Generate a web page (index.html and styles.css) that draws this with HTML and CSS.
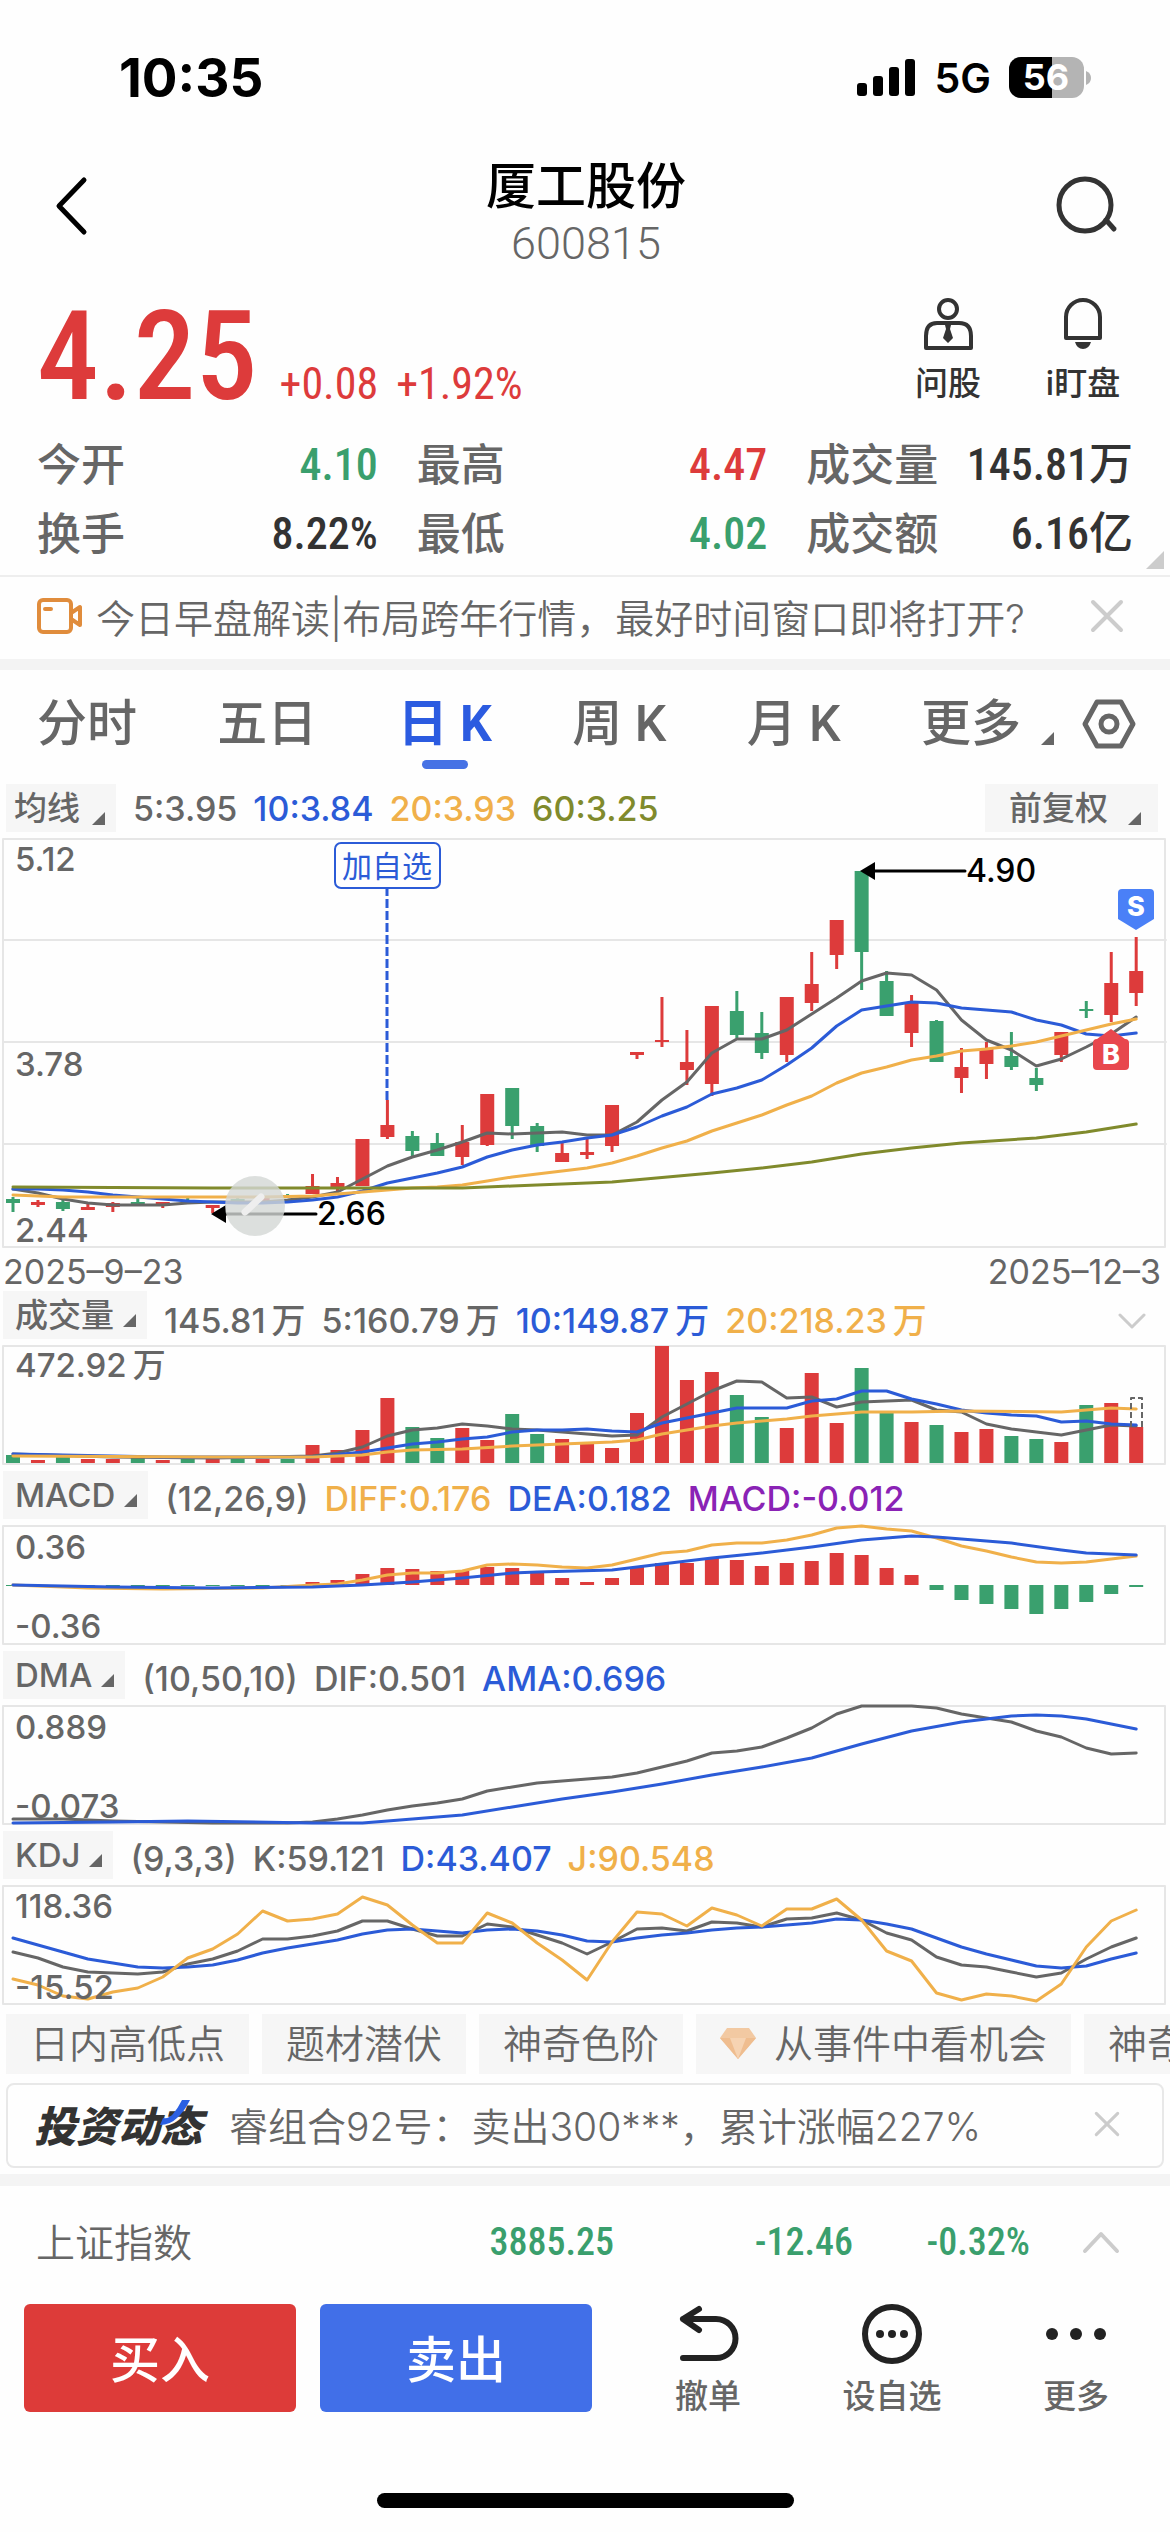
FILE: index.html
```
<!DOCTYPE html>
<html lang="zh-CN">
<head>
    <meta charset="UTF-8">
    <meta name="viewport" content="width=device-width, initial-scale=1.0">
    <title>厦工股份 600815</title>
    <link rel="stylesheet" href="styles.css">
</head>
<body>
    <div class="status-bar">
        <span class="time">10:35</span>
        <div class="status-right">
            <svg class="signal" width="60" height="38" viewBox="0 0 60 38">
                <rect x="0" y="24" width="10" height="13" rx="3"/>
                <rect x="16" y="17" width="10" height="20" rx="3"/>
                <rect x="32" y="8" width="10" height="29" rx="3"/>
                <rect x="48" y="0" width="10" height="37" rx="3"/>
            </svg>
            <span class="network">5G</span>
            <svg class="battery" width="82" height="42" viewBox="0 0 82 42">
                <rect x="0" y="0" width="75" height="41" rx="12" fill="#b4b4b4"/>
                <path d="M12 0h31v41H12A12 12 0 0 1 0 29V12A12 12 0 0 1 12 0z" fill="#000"/>
                <path d="M77 14q5 2 5 7t-5 7z" fill="#b4b4b4"/>
                <text x="37" y="33" text-anchor="middle">56</text>
            </svg>
        </div>
    </div>

    <header class="header">
        <button class="icon-btn back" aria-label="返回">
            <svg width="34" height="60" viewBox="0 0 34 60"><path d="M30 4L5 30l25 26"/></svg>
        </button>
        <div class="title">
            <h1>厦工股份</h1>
            <p>600815</p>
        </div>
        <button class="icon-btn search" aria-label="搜索">
            <svg width="64" height="60" viewBox="0 0 64 60"><circle cx="31" cy="29" r="26"/><path d="M52 44l8 9"/></svg>
        </button>
    </header>

    <section class="quote">
        <div class="quote-top">
            <div class="price">
                <strong>4.25</strong>
                <span>+0.08</span>
                <span>+1.92%</span>
            </div>
            <div class="shortcuts">
                <button>
                    <svg width="50" height="54" viewBox="0 0 50 54">
                        <circle cx="25" cy="13" r="9"/>
                        <path d="M14 27h22q12 0 12 13v12H3V40q0-13 11-13z"/>
                        <path class="fill" d="M22 29h6l-1 4 3 9-5 5-5-5 3-9z"/>
                    </svg>
                    问股
                </button>
                <button>
                    <svg width="50" height="54" viewBox="0 0 50 54">
                        <path d="M8 42V21a17 17 0 0 1 34 0v21z"/>
                        <path class="fill" d="M17 46h16q-2 7-8 7t-8-7z"/>
                    </svg>
                    i盯盘
                </button>
            </div>
        </div>
        <div class="stats">
            <div><span>今开</span><b class="green">4.10</b></div>
            <div><span>最高</span><b class="red">4.47</b></div>
            <div><span>成交量</span><b>145.81万</b></div>
            <div><span>换手</span><b>8.22%</b></div>
            <div><span>最低</span><b class="green">4.02</b></div>
            <div><span>成交额</span><b>6.16亿</b></div>
        </div>
        <i class="corner"></i>
    </section>

    <div class="notice">
        <svg class="video" width="46" height="38" viewBox="0 0 46 38">
            <rect x="2" y="3" width="32" height="32" rx="4"/>
            <path d="M8 12h6M34 16l9-6v18l-9-6"/>
        </svg>
        <a href="#">今日早盘解读|布局跨年行情，最好时间窗口即将打开?</a>
        <button class="close" aria-label="关闭">
            <svg width="34" height="34" viewBox="0 0 34 34"><path d="M3 3l28 28M31 3L3 31"/></svg>
        </button>
    </div>

    <nav class="tabs">
        <div class="tab-list">
            <a href="#">分时</a>
            <a href="#">五日</a>
            <a href="#" class="active">日 K</a>
            <a href="#">周 K</a>
            <a href="#">月 K</a>
            <a href="#" class="more">更多<i class="tri"></i></a>
        </div>
        <button class="settings" aria-label="设置">
            <svg width="54" height="50" viewBox="0 0 54 50"><path d="M15 3h24l12 22-12 22H15L3 25z"/><circle cx="27" cy="25" r="8"/></svg>
        </button>
    </nav>

    <section class="panel">
        <div class="panel-head ma-head">
            <button class="tag">均线<i class="tri"></i></button>
            <p class="values"><span>5:3.95</span><span class="blue">10:3.84</span><span class="orange">20:3.93</span><span class="olive">60:3.25</span></p>
            <button class="tag adjust">前复权<i class="tri"></i></button>
        </div>
        <svg class="chart" id="kline" viewBox="0 0 1170 410">
            <path class="grid" d="M3 102H1166M3 204H1166M3 306H1166"/>
            <rect class="frame" x="3" y="1" width="1162" height="408"/>
            <g class="plot"></g>
            <g class="favorite">
                <path d="M387 49V262" stroke-dasharray="9 3"/>
                <rect x="335" y="5" width="105" height="45" rx="6"/>
                <text x="387" y="39" text-anchor="middle">加自选</text>
            </g>
            <g class="callout">
                <path d="M222 376H316" /><path class="head" d="M211 376l15-9v18z"/>
                <text x="317" y="387">2.66</text>
                <path d="M872 33H965"/><path class="head" d="M860 33l15-9v18z"/>
                <text x="966" y="44">4.90</text>
            </g>
            <g class="watermark">
                <circle cx="255" cy="368" r="30"/>
                <path d="M245 374l16-15"/>
            </g>
            <path d="M1122 51h28q4 0 4 4v26l-18 11-18-11V55q0-4 4-4z" fill="#4a80f7"/>
            <path d="M1111 191l14 10q4 0 4 4v23q0 4-4 4h-28q-4 0-4-4v-23q0-4 4-4z" fill="#e8474d"/>
            <text class="mark" x="1136" y="78">S</text>
            <text class="mark" x="1111" y="226">B</text>
            <text class="axis" x="15" y="33">5.12</text>
            <text class="axis" x="15" y="238">3.78</text>
            <text class="axis" x="15" y="404">2.44</text>
        </svg>
        <div class="dates"><span>2025–9–23</span><span>2025–12–3</span></div>
    </section>

    <section class="panel">
        <div class="panel-head">
            <button class="tag">成交量<i class="tri"></i></button>
            <p class="values"><span>145.81<i class="unit">万</i></span><span>5:160.79<i class="unit">万</i></span><span class="blue">10:149.87<i class="unit">万</i></span><span class="orange">20:218.23<i class="unit">万</i></span></p>
            <button class="fold" aria-label="收起">
                <svg width="28" height="18" viewBox="0 0 28 18"><path d="M2 3l12 12L26 3"/></svg>
            </button>
        </div>
        <svg class="chart" id="volume" viewBox="0 0 1170 120">
            <rect class="frame" x="3" y="1" width="1162" height="118"/>
            <g class="plot"></g>
            <path class="estimate" d="M1131 82V53h11v29"/>
            <text class="axis" x="15" y="32">472.92<tspan dx="6">万</tspan></text>
        </svg>
    </section>

    <section class="panel">
        <div class="panel-head">
            <button class="tag">MACD<i class="tri"></i></button>
            <p class="values"><span>(12,26,9)</span><span class="orange">DIFF:0.176</span><span class="blue">DEA:0.182</span><span class="purple">MACD:-0.012</span></p>
        </div>
        <svg class="chart" id="macd" viewBox="0 0 1170 120">
            <rect class="frame" x="3" y="1" width="1162" height="118"/>
            <g class="plot"></g>
            <text class="axis" x="15" y="34">0.36</text>
            <text class="axis" x="15" y="113">-0.36</text>
        </svg>
    </section>

    <section class="panel">
        <div class="panel-head">
            <button class="tag">DMA<i class="tri"></i></button>
            <p class="values"><span>(10,50,10)</span><span>DIF:0.501</span><span class="blue">AMA:0.696</span></p>
        </div>
        <svg class="chart" id="dma" viewBox="0 0 1170 120">
            <rect class="frame" x="3" y="1" width="1162" height="118"/>
            <g class="plot"></g>
            <text class="axis" x="15" y="34">0.889</text>
            <text class="axis" x="15" y="113">-0.073</text>
        </svg>
    </section>

    <section class="panel">
        <div class="panel-head">
            <button class="tag">KDJ<i class="tri"></i></button>
            <p class="values"><span>(9,3,3)</span><span>K:59.121</span><span class="blue">D:43.407</span><span class="orange">J:90.548</span></p>
        </div>
        <svg class="chart" id="kdj" viewBox="0 0 1170 120">
            <rect class="frame" x="3" y="1" width="1162" height="118"/>
            <g class="plot"></g>
            <text class="axis" x="15" y="33">118.36</text>
            <text class="axis" x="15" y="114">-15.52</text>
        </svg>
    </section>

    <div class="chips">
        <button>日内高低点</button>
        <button>题材潜伏</button>
        <button>神奇色阶</button>
        <button>
            <svg width="36" height="32" viewBox="0 0 36 32">
                <path d="M7 0h22l7 10-18 21L0 10z" fill="#f2c9a2"/>
                <path d="M0 10h36L18 31z" fill="#efbd8f"/>
                <path d="M10 10h16l-8 21z" fill="#f6d3b2"/>
            </svg>
            从事件中看机会
        </button>
        <button>神奇电波</button>
    </div>

    <div class="news">
        <span class="news-logo">投资动态<svg width="32" height="28" viewBox="0 0 32 28"><path d="M22 0h8Q24 12 17 18 10 25 0 25l3-7q6 1 10-4Q18 8 22 0z" fill="#2b5fe3"/></svg></span>
        <a href="#">睿组合92号：卖出300***，累计涨幅227%</a>
        <button class="close" aria-label="关闭">
            <svg width="26" height="26" viewBox="0 0 34 34"><path d="M3 3l28 28M31 3L3 31"/></svg>
        </button>
    </div>

    <div class="index-row">
        <span class="index-name">上证指数</span>
        <span class="num">3885.25</span>
        <span class="num">-12.46</span>
        <span class="num">-0.32%</span>
        <button aria-label="展开">
            <svg width="38" height="24" viewBox="0 0 38 24"><path d="M3 21L19 4l16 17"/></svg>
        </button>
    </div>

    <footer class="actions">
        <button class="trade buy">买入</button>
        <button class="trade sell">卖出</button>
        <div class="tools">
            <button>
                <svg width="62" height="60" viewBox="0 0 62 60"><path d="M22 5L6 15l16 11M6 15h33a19 19 0 0 1 0 39H6"/></svg>
                撤单
            </button>
            <button>
                <svg width="62" height="60" viewBox="0 0 62 60">
                    <circle cx="31" cy="30" r="27"/>
                    <g class="dots"><circle cx="19" cy="30" r="4"/><circle cx="31" cy="30" r="4"/><circle cx="43" cy="30" r="4"/></g>
                </svg>
                设自选
            </button>
            <button>
                <svg width="62" height="60" viewBox="0 0 62 60">
                    <g class="dots"><circle cx="7" cy="30" r="6"/><circle cx="31" cy="30" r="6"/><circle cx="55" cy="30" r="6"/></g>
                </svg>
                更多
            </button>
        </div>
    </footer>
    <div class="home-bar"></div>

    <script src="script.js"></script>
</body>
</html>
```
FILE: styles.css
```
* {
    margin: 0;
    padding: 0;
    box-sizing: border-box;
}

body {
    font-family: Inter, 'Noto Sans CJK SC', sans-serif;
    background: #fefefe;
    color: #666;
    overflow-x: hidden;
}

button {
    border: 0;
    background: none;
    font: inherit;
    color: inherit;
    cursor: pointer;
}

a {
    color: inherit;
    text-decoration: none;
}

svg {
    display: block;
    flex: none;
    fill: none;
    stroke-linecap: round;
    stroke-linejoin: round;
}

.red { color: #dd3b3b; }
.green { color: #3a9f6d; }
.blue { color: #2b5bd7; }
.orange { color: #f0b04a; }
.olive { color: #808a2c; }
.purple { color: #8a22b5; }

/* Status bar */
.status-bar {
    display: flex;
    justify-content: space-between;
    align-items: center;
    height: 156px;
    padding: 0 79px 0 119px;
    color: #000;
}

.time {
    font-size: 53px;
    font-weight: 700;
}

.status-right {
    display: flex;
    align-items: center;
    gap: 18px;
}

.signal {
    fill: #000;
}

.network {
    font-size: 41px;
    font-weight: 600;
}

.battery text {
    font-size: 36px;
    font-weight: 700;
    fill: #fff;
}

/* Header */
.header {
    display: flex;
    justify-content: space-between;
    align-items: flex-start;
    height: 114px;
    padding: 0 52px 0 54px;
}

.icon-btn {
    display: flex;
    align-items: center;
    width: 64px;
    height: 100px;
}

.back svg {
    stroke: #000;
    stroke-width: 5;
}

.search svg {
    stroke: #333;
    stroke-width: 5;
}

.title {
    text-align: center;
}

.title h1 {
    font-size: 50px;
    font-weight: 500;
    line-height: 61px;
    color: #000;
}

.title p {
    font-family: Roboto, sans-serif;
    font-size: 45px;
    font-weight: 300;
    line-height: 54px;
}

/* Quote */
.quote {
    position: relative;
    padding: 0 37px 6px;
    border-bottom: 2px solid #eee;
}

.quote-top {
    display: flex;
    justify-content: space-between;
    height: 161px;
}

.price {
    display: flex;
    align-items: baseline;
    gap: 18px;
    font-family: 'Roboto Condensed', Roboto, sans-serif;
    font-size: 44px;
    line-height: 174px;
    color: #dd3b3b;
}

.price strong {
    margin-right: 4px;
    font-size: 124px;
    font-weight: 500;
}

.shortcuts {
    display: flex;
    gap: 35px;
    padding-top: 26px;
}

.shortcuts button {
    display: flex;
    flex-direction: column;
    align-items: center;
    gap: 8px;
    min-width: 100px;
    font-size: 33px;
    font-weight: 500;
    line-height: 50px;
    color: #333;
}

.shortcuts svg {
    stroke: #333;
    stroke-width: 4;
}

.shortcuts .fill {
    fill: #333;
    stroke: none;
}

.stats {
    display: grid;
    grid-template-columns: 340fr 350fr 326fr;
    column-gap: 39px;
}

.stats div {
    display: flex;
    justify-content: space-between;
    font-size: 44px;
    font-weight: 500;
    line-height: 69px;
}

.stats b {
    font-family: 'Roboto Condensed', Roboto, 'Noto Sans CJK SC', sans-serif;
    font-weight: 500;
}

.stats b:not([class]) {
    color: #333;
}

.corner {
    position: absolute;
    right: 6px;
    bottom: 6px;
    border-left: 18px solid transparent;
    border-bottom: 18px solid #ccc;
}

/* Notice */
.notice {
    display: flex;
    align-items: center;
    gap: 13px;
    height: 93px;
    padding: 0 46px 4px 37px;
    border-bottom: 11px solid #f3f3f3;
    font-size: 39px;
    font-weight: 350;
}

.notice a,
.news a {
    flex: 1;
    white-space: nowrap;
}

.video {
    stroke: #e08c3c;
    stroke-width: 4;
}

.close svg {
    stroke: #ccc;
    stroke-width: 4;
}

/* Tabs */
.tabs {
    display: flex;
    align-items: center;
    gap: 28px;
    height: 108px;
    padding: 0 34px 0 37px;
}

.tab-list {
    display: flex;
    flex: 1;
    justify-content: space-between;
    font-family: Roboto, 'Noto Sans CJK SC', sans-serif;
    font-size: 50px;
    font-weight: 500;
    line-height: 108px;
}

.tab-list a {
    position: relative;
}

.tab-list .active {
    font-weight: 700;
    color: #2b5be0;
}

.active::after {
    content: '';
    position: absolute;
    left: 50%;
    bottom: 9px;
    width: 46px;
    height: 9px;
    margin-left: -23px;
    border-radius: 5px;
    background: #4672e5;
}

.tri {
    display: inline-block;
    margin-left: 9px;
    border-left: 13px solid transparent;
    border-bottom: 13px solid #666;
}

.more .tri {
    margin-left: 20px;
    vertical-align: -4px;
}

.settings svg {
    stroke: #666;
    stroke-width: 5;
}

/* Chart panels */
.panel-head {
    display: flex;
    align-items: center;
    height: 60px;
    padding-left: 3px;
    font-size: 33px;
}

.ma-head {
    padding: 0 12px 0 6px;
}

.tag {
    height: 48px;
    padding: 0 11px 0 12px;
    background: #f6f6f6;
    font-size: 33px;
    font-weight: 500;
    line-height: 48px;
}

.ma-head .tag {
    padding-left: 8px;
}

.ma-head .adjust {
    margin-left: auto;
    padding: 0 17px 0 24px;
}

.ma-head .tri {
    margin-left: 12px;
    vertical-align: -5px;
}

.ma-head .adjust .tri {
    margin-left: 20px;
}

.values {
    display: flex;
    gap: 16px;
    padding: 7px 0 0 17px;
    font-size: 34px;
    font-weight: 500;
    white-space: nowrap;
}

.ma-head .values {
    padding-top: 0;
}

.unit {
    margin-left: 6px;
    font-style: normal;
}

.fold {
    margin: 12px 24px 0 auto;
}

.fold svg {
    stroke: #ccc;
    stroke-width: 3;
}

.chart {
    width: 100%;
    height: auto;
    overflow: visible;
}

.grid,
.frame {
    stroke: #e6e6e6;
    stroke-width: 2;
}

.axis {
    font-size: 33px;
    font-weight: 500;
    fill: #666;
}

.line {
    stroke-width: 3;
}

.favorite {
    stroke: #2b5bd7;
    stroke-width: 3;
    stroke-linecap: butt;
}

.favorite rect {
    fill: #fefefe;
    stroke-width: 2;
}

.favorite text {
    font-size: 30px;
    fill: #2b5bd7;
    stroke: none;
}

.callout {
    stroke: #000;
    stroke-width: 3;
}

.callout .head {
    fill: #000;
    stroke: none;
}

.callout text {
    font-size: 32px;
    font-weight: 500;
    fill: #000;
    stroke: none;
}

.watermark circle {
    fill: #d3d7d5;
    opacity: 0.8;
}

.watermark path {
    stroke: #eee;
    stroke-width: 7;
}

.mark {
    font-size: 27px;
    font-weight: 800;
    text-anchor: middle;
    fill: #fff;
}

.estimate {
    stroke: #666;
    stroke-width: 2;
    stroke-dasharray: 6 3;
    stroke-linecap: butt;
}

.dates {
    display: flex;
    justify-content: space-between;
    height: 37px;
    padding: 5px 9px 0 3px;
    font-size: 34px;
    font-weight: 400;
    line-height: 38px;
}

/* Chips */
.chips {
    display: flex;
    gap: 13px;
    padding: 9px 0 9px 6px;
    overflow: hidden;
}

.chips button {
    display: flex;
    flex: none;
    align-items: center;
    gap: 18px;
    height: 60px;
    padding: 0 24px;
    background: #f6f6f6;
    font-size: 39px;
    font-weight: 350;
    line-height: 58px;
}

/* News */
.news {
    display: flex;
    align-items: center;
    height: 85px;
    margin: 0 6px 6px;
    padding: 0 42px 4px 26px;
    border: 2px solid #e8e8e8;
    border-radius: 8px;
    font-size: 39px;
    font-weight: 350;
}

.news-logo {
    position: relative;
    margin-right: 27px;
    font-size: 42px;
    font-weight: 900;
    font-style: italic;
    color: #333;
}

.news-logo svg {
    position: absolute;
    right: 10px;
    top: 7px;
}

/* Index row */
.index-row {
    display: grid;
    grid-template-columns: 340fr 238fr 239fr 177fr 90fr;
    align-items: center;
    height: 123px;
    padding: 0 50px 0 36px;
    border-top: 12px solid #f4f4f4;
}

.index-name {
    padding-bottom: 4px;
    font-size: 39px;
    font-weight: 350;
}

.num {
    font-family: 'Roboto Condensed', Roboto, sans-serif;
    font-size: 38px;
    font-weight: 500;
    text-align: right;
    color: #3a9f6d;
}

.index-row button {
    justify-self: end;
}

.index-row svg {
    stroke: #ccc;
    stroke-width: 4;
}

/* Bottom actions */
.actions {
    display: flex;
    gap: 24px;
    padding: 7px 2px 0 24px;
}

.trade {
    flex: 272;
    height: 108px;
    padding-bottom: 4px;
    border-radius: 6px;
    font-size: 50px;
    font-weight: 500;
    color: #fff;
}

.buy { background: #dd3b39; }
.sell { background: #416fe8; }

.tools {
    display: flex;
    flex: 552;
}

.tools button {
    display: flex;
    flex: 1;
    flex-direction: column;
    align-items: center;
    gap: 8px;
    font-size: 33px;
    font-weight: 500;
    line-height: 48px;
}

.tools svg {
    stroke: #222;
    stroke-width: 6;
}

.tools .dots {
    fill: #222;
    stroke: none;
}

.home-bar {
    width: 417px;
    height: 15px;
    margin: 73px auto 16px;
    border-radius: 8px;
    background: #000;
}
```
FILE: script.js
```
const NS = 'http://www.w3.org/2000/svg';
const RED = '#dd3b3b';
const GREEN = '#3aa06e';
const GREY = '#666666';
const BLUE = '#2b5bd7';
const ORANGE = '#f0b04a';
const OLIVE = '#808a2c';
const BAR = 14;

const xAt = i => 13 + i * 24.96;

function plotOf(id) {
    return document.querySelector('#' + id + ' .plot');
}

function rect(g, x, y, w, h, color) {
    const el = document.createElementNS(NS, 'rect');
    el.setAttribute('x', x);
    el.setAttribute('y', y);
    el.setAttribute('width', w);
    el.setAttribute('height', h);
    el.setAttribute('fill', color);
    g.appendChild(el);
}

// points: a plain list (one per day) or [day, y] pairs
function line(g, points, color) {
    const el = document.createElementNS(NS, 'polyline');
    el.setAttribute('class', 'line');
    el.setAttribute('stroke', color);
    el.setAttribute('points', points.map((p, i) =>
        Array.isArray(p) ? xAt(p[0]) + ',' + p[1] : xAt(i) + ',' + p).join(' '));
    g.appendChild(el);
}

// up/down for each day
const days = 'drdrrdrdrdrdrrrrddrrddrrrrrrrddrrrddrdrrddrdrr'.split('').map(c => c === 'r' ? RED : GREEN);

// high, body top, body bottom, low
const candles = [
    [359, 361, 365, 374], [362, 364, 367, 369], [362, 364, 371, 373], [366, 369, 372, 372],
    [364, 365, 369, 374], [360, 364, 368, 368], [364, 364, 368, 370], [360, 363, 365, 365],
    [367, 367, 370, 375], [360, 361, 364, 364], [358, 359, 363, 363], [356, 357, 359, 360],
    [336, 348, 356, 356], [339, 345, 349, 354], [301, 301, 348, 348], [262, 287, 299, 301],
    [293, 298, 313, 318], [295, 305, 318, 318], [287, 304, 319, 327], [256, 256, 307, 308],
    [250, 250, 288, 301], [285, 288, 308, 314], [305, 315, 324, 324], [301, 314, 317, 321],
    [267, 267, 308, 314], [214, 214, 217, 221], [159, 202, 204, 209], [192, 224, 232, 247],
    [168, 168, 246, 258], [153, 173, 197, 200], [174, 195, 215, 221], [159, 159, 217, 224],
    [114, 146, 165, 173], [82, 82, 117, 131], [33, 33, 114, 152], [133, 143, 178, 178],
    [157, 165, 195, 209], [182, 183, 224, 224], [210, 229, 240, 255], [204, 211, 226, 241],
    [194, 218, 229, 232], [230, 240, 247, 253], [194, 194, 217, 224], [163, 171, 173, 180],
    [114, 145, 177, 184], [99, 133, 155, 168]
];

const kline = plotOf('kline');
candles.forEach(([high, top, bottom, low], i) => {
    rect(kline, xAt(i) - 1.5, high, 3, low - high, days[i]);
    rect(kline, xAt(i) - BAR / 2, top, BAR, bottom - top, days[i]);
});
line(kline, [351, 355, 361, 365, 367, 367, 367, 365, 364, 364, 364, 362, 359, 354, 341, 328, 319, 312, 304, 295, 296, 295, 294,
    297, 297, 284, 262, 244, 215, 201, 201, 192, 176, 160, 143, 135, 137, 152, 182, 202, 212, 228, 221, 209, 196, 179], GREY);
line(kline, [351, 351, 352, 354, 357, 359, 361, 363, 364, 365, 365, 364, 362, 359, 353, 345, 340, 335, 329, 319, 312, 307, 304,
    300, 297, 289, 278, 269, 256, 250, 242, 227, 210, 188, 172, 168, 164, 165, 170, 172, 174, 182, 187, 196, 198, 195], BLUE);
line(kline, [[0, 357], [2, 359], [10, 359], [12, 358], [13, 356], [14, 354], [15, 352], [16, 350], [17, 349], [18, 347], [19, 343],
    [20, 339], [21, 336], [22, 333], [23, 330], [24, 325], [25, 318], [26, 310], [27, 303], [28, 293], [29, 285], [30, 277],
    [31, 267], [32, 258], [33, 245], [34, 235], [35, 229], [36, 222], [37, 218], [38, 213], [39, 211], [40, 208], [41, 204],
    [42, 198], [43, 192], [44, 186], [45, 181]], ORANGE);
line(kline, [[0, 349], [8, 350], [18, 350], [20, 348], [24, 344], [28, 335], [30, 330], [32, 324], [34, 316], [36, 310],
    [38, 305], [41, 300], [43, 294], [45, 286]], OLIVE);

const volume = plotOf('volume');
const volTops = [110, 115, 112, 114, 114, 113, 115, 114, 114, 114, 114, 114, 100, 105, 85, 53, 82, 93, 83, 95, 69, 89, 94, 99,
    103, 68, 1, 35, 27, 50, 72, 83, 28, 78, 23, 67, 77, 80, 87, 84, 91, 94, 97, 60, 58, 82];
volTops.forEach((y, i) => rect(volume, xAt(i) - BAR / 2, y, BAR, 118 - y, days[i]));
line(volume, [[0, 109], [4, 112], [8, 113], [12, 111], [13, 108], [14, 102], [15, 91], [16, 85], [17, 83], [18, 79], [19, 81],
    [20, 84], [21, 85], [22, 87], [23, 89], [24, 91], [25, 90], [26, 72], [27, 59], [28, 46], [29, 36], [30, 37], [31, 53],
    [32, 52], [33, 62], [34, 57], [35, 56], [36, 55], [37, 65], [38, 67], [39, 79], [40, 84], [41, 87], [42, 90], [43, 85],
    [44, 80], [45, 81]], GREY);
line(volume, [[0, 109], [6, 112], [12, 112], [14, 107], [15, 103], [16, 99], [17, 97], [18, 94], [19, 92], [20, 87], [21, 85],
    [22, 85], [23, 84], [24, 86], [25, 87], [26, 78], [27, 73], [28, 68], [29, 63], [30, 63], [31, 63], [32, 56], [33, 54],
    [34, 46], [35, 46], [36, 54], [37, 59], [38, 65], [39, 68], [40, 70], [41, 71], [42, 77], [43, 76], [44, 79], [45, 80]], BLUE);
line(volume, [[0, 111], [8, 112], [12, 112], [14, 110], [15, 107], [16, 105], [18, 104], [20, 101], [22, 99], [24, 97], [25, 95],
    [26, 89], [27, 85], [28, 81], [29, 78], [30, 76], [31, 74], [32, 71], [33, 69], [34, 67], [36, 67], [38, 66], [42, 67],
    [44, 63], [45, 64]], ORANGE);

const macd = plotOf('macd');
const ZERO = 60;
const macdEnds = [61, 61, 61, 61, 61, 61, 61, 61, 61, 61, 61, 61, 57, 55, 49, 43, 44, 46, 46, 42, 43, 47, 53, 57, 53, 42, 38, 38,
    33, 35, 41, 38, 36, 28, 30, 43, 50, 65, 75, 79, 84, 89, 84, 77, 69, 62];
macdEnds.forEach((y, i) => rect(macd, xAt(i) - BAR / 2, Math.min(y, ZERO), BAR, Math.abs(y - ZERO), y < ZERO ? RED : GREEN));
line(macd, [[0, 60], [3, 63], [6, 64], [10, 63], [12, 60], [13, 59], [14, 55], [15, 50], [16, 48], [17, 48], [18, 46], [19, 40],
    [20, 39], [21, 40], [22, 42], [23, 43], [24, 40], [25, 34], [26, 28], [27, 26], [28, 20], [29, 18], [30, 18], [31, 15],
    [32, 10], [33, 3], [34, 1], [35, 4], [36, 6], [37, 13], [38, 21], [39, 26], [40, 32], [41, 37], [42, 38], [43, 37],
    [44, 34], [45, 31]], ORANGE);
line(macd, [[0, 60], [4, 62], [8, 63], [12, 62], [14, 60], [16, 57], [18, 53], [20, 48], [21, 47], [24, 45], [26, 39], [28, 33],
    [30, 28], [32, 22], [34, 15], [35, 13], [36, 11], [37, 12], [38, 14], [40, 18], [42, 25], [43, 28], [44, 29], [45, 30]], BLUE);

const dma = plotOf('dma');
line(dma, [[0, 114], [2, 114], [4, 116], [8, 118], [11, 118], [12, 117], [13, 114], [14, 110], [15, 105], [16, 101], [17, 98],
    [18, 94], [19, 86], [20, 82], [21, 78], [22, 76], [23, 74], [24, 72], [25, 68], [26, 62], [27, 56], [28, 48], [29, 46],
    [30, 42], [31, 33], [32, 23], [33, 9], [34, 1], [36, 1], [37, 3], [38, 9], [39, 13], [40, 17], [41, 26], [42, 32],
    [43, 43], [44, 49], [45, 48]], GREY);
line(dma, [[0, 118], [4, 117], [7, 116], [12, 118], [14, 118], [16, 114], [18, 110], [20, 102], [22, 94], [24, 87], [26, 79],
    [28, 70], [30, 62], [32, 53], [34, 39], [36, 26], [38, 17], [40, 11], [41, 10], [42, 11], [43, 14], [44, 19], [45, 24]], BLUE);

const kdj = plotOf('kdj');
line(kdj, [67, 73, 82, 87, 88, 89, 87, 79, 74, 66, 54, 54, 51, 46, 36, 36, 44, 51, 51, 39, 42, 50, 58, 69, 57, 44, 43, 46, 37,
    38, 42, 34, 33, 28, 35, 48, 55, 72, 80, 82, 87, 92, 88, 74, 62, 53], GREY);
line(kdj, [53, 60, 67, 74, 78, 82, 83, 82, 80, 75, 68, 63, 59, 55, 49, 45, 44, 46, 48, 45, 44, 46, 50, 56, 57, 53, 50, 48, 45,
    43, 42, 40, 38, 34, 35, 39, 44, 53, 62, 69, 75, 81, 83, 81, 74, 68], BLUE);
line(kdj, [94, 100, 111, 114, 107, 103, 92, 73, 64, 49, 26, 36, 34, 29, 12, 20, 40, 58, 58, 28, 38, 58, 75, 95, 57, 27, 29, 41,
    23, 30, 41, 24, 24, 14, 35, 66, 76, 108, 115, 109, 111, 116, 99, 62, 36, 25], ORANGE);
```
